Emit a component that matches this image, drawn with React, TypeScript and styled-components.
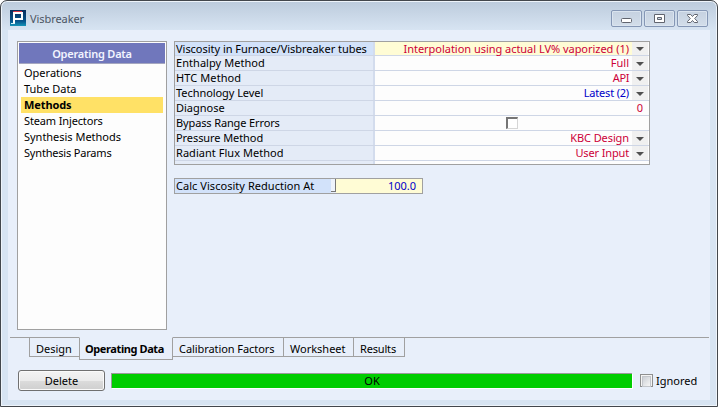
import React from 'react';
import styled, { createGlobalStyle } from 'styled-components';

const Global = createGlobalStyle`
  * { box-sizing: border-box; }
  body { margin: 0; background: #fff; overflow: hidden; }
  button { font: inherit; color: inherit; margin: 0; padding: 0; }
`;

const Window = styled.div`
  width: 718px;
  height: 407px;
  display: flex;
  flex-direction: column;
  padding: 0 7px 7px;
  border: 1px solid #43474c;
  border-radius: 7px 7px 0 0;
  background: linear-gradient(#bccbdc 0, #d7e4f2 29px, #d7e4f2 100%);
  box-shadow: inset 0 0 0 1px #eef4fa;
  font: 11px/15px 'Noto Sans', 'Open Sans', sans-serif;
  color: #000;
  white-space: nowrap;
`;

const TitleBar = styled.header`
  flex: 0 0 29px;
  display: flex;
  align-items: flex-start;
  padding: 9px 2px 0 2px;
`;

const Title = styled.h1<{ $tracking: number }>`
  flex: 1;
  margin: 1px 0 0 4px;
  font-size: 11px;
  line-height: 15px;
  font-weight: 400;
  color: #4b5563;
  letter-spacing: ${p => p.$tracking}px;
`;

const Logo = styled.svg`
  display: block;
  width: 16px;
  height: 16px;
  margin-top: 1px;
  margin-top: 0;
`;

const CaptionButtons = styled.div`
  display: flex;
  gap: 2px;
`;

const CaptionButton = styled.button`
  width: 31px;
  height: 17px;
  border: 1px solid #8597b5;
  border-radius: 2px;
  background: linear-gradient(#c5d1e0, #d3deea);
  box-shadow: inset 0 0 0 1px #dae4ef;
  svg { display: block; width: 29px; height: 15px; }
`;

const Client = styled.main`
  flex: 1;
  display: flex;
  flex-direction: column;
  background: #e8effa;
`;

const Workspace = styled.section`
  flex: 0 0 307px;
  display: flex;
  align-items: flex-start;
  padding: 11px 0 0 9px;
`;

const Sidebar = styled.nav`
  width: 150px;
  height: 289px;
  margin-right: 7px;
  border: 1px solid #a0a0a0;
  padding: 1px;
  background: #fdfdfd;
`;

const SidebarHeading = styled.h2`
  height: 21px;
  margin: 0 0 1px;
  border-bottom: 1px solid #a5a7c0;
  background: #7077bc;
  color: #f2f4ff;
  font-size: 11px;
  line-height: 22px;
  font-weight: 600;
  text-align: center;
  letter-spacing: -0.22px;
`;

const NavItem = styled.div<{ $active?: boolean; $tracking: number }>`
  height: 16px;
  margin: 0 2px;
  padding-left: 3px;
  line-height: 16px;
  background: ${p => (p.$active ? '#ffe166' : 'transparent')};
  font-weight: ${p => (p.$active ? 700 : 400)};
  letter-spacing: ${p => p.$tracking}px;
`;

const Panels = styled.div`
  display: flex;
  flex-direction: column;
  align-items: flex-start;
  gap: 13px;
`;

const Grid = styled.div`
  width: 476px;
  height: 124px;
  border: 1px solid #a0a0a0;
  background: #fdfdfd;
  overflow: hidden;
`;

const Row = styled.div`
  display: flex;
  height: 15px;
  border-bottom: 1px solid #ced6e6;
  line-height: 14px;
  &:first-child { height: 14px; line-height: 13px; }
`;

const RowLabel = styled.div<{ $active?: boolean; $tracking: number }>`
  flex: 0 0 200px;
  width: 200px;
  padding-left: 1px;
  border-right: 2px solid #d3dced;
  background: ${p => (p.$active ? '#d2e2fa' : '#e4ebf7')};
  letter-spacing: ${p => p.$tracking}px;
`;

const tones = { red: '#cc0038', blue: '#0000c8' };

const RowValue = styled.div<{ $tone: keyof typeof tones; $active?: boolean; $wide?: boolean; $tracking: number }>`
  flex: 1;
  padding-right: ${p => (p.$wide ? 6 : 3)}px;
  text-align: right;
  color: ${p => tones[p.$tone]};
  background: ${p => (p.$active ? '#fffcd5' : 'transparent')};
  letter-spacing: ${p => p.$tracking}px;
`;

const DropButton = styled.button`
  flex: 0 0 17px;
  border: 0;
  border-right: 1px solid #fdfdfd;
  background: #f0f0f0;
  svg { display: block; width: 16px; height: 13px; }
`;

const SunkenCheck = styled.span`
  width: 12px;
  height: 12px;
  margin: 1px auto 0 131px;
  border: 1px solid #d6d6d6;
  border-top: 2px solid #757575;
  border-left: 2px solid #757575;
  background: #fff;
`;

const CalcField = styled.div`
  display: flex;
  width: 249px;
  height: 16px;
  border: 1px solid #a0a0a0;
  line-height: 13px;
`;

const CalcLabel = styled.div<{ $tracking: number }>`
  width: 156px;
  padding-left: 1px;
  background: #d2e2fa;
  letter-spacing: ${p => p.$tracking}px;
`;

const CalcHandle = styled.span`
  width: 5px;
  height: 13px;
  border: solid #777;
  border-width: 0 1px 1px 0;
  background: #eef3fc;
`;

const CalcValue = styled.div`
  flex: 1;
  padding-right: 6px;
  background: #fffcd5;
  color: ${tones.blue};
  text-align: right;
`;

const TabStrip = styled.nav`
  flex: 0 0 24px;
  display: flex;
  align-items: flex-start;
  margin: 0 1px 0 2px;
  &::before, &::after {
    content: '';
    height: 1px;
    background: #a0a0a0;
  }
  &::before { width: 19px; }
  &::after { flex: 1; }
`;

const Tab = styled.div<{ $width: number; $active?: boolean; $tracking: number }>`
  width: ${p => p.$width}px;
  height: ${p => (p.$active ? 23 : 20)}px;
  border: 1px solid #a0a0a0;
  border-top-color: ${p => (p.$active ? 'transparent' : '#a0a0a0')};
  border-left-width: ${p => (p.$active ? 1 : 0)}px;
  &:first-of-type { border-left-width: 1px; border-right-width: 0; }
  padding-left: ${p => (p.$active ? 5 : 6)}px;
  line-height: 22px;
  font-weight: ${p => (p.$active ? 700 : 400)};
  letter-spacing: ${p => p.$tracking}px;
`;

const Footer = styled.footer`
  display: flex;
  align-items: center;
  height: 39px;
  padding: 0 0 0 10px;
`;

const DeleteButton = styled.button`
  width: 87px;
  height: 21px;
  border: 1px solid #707070;
  border-radius: 3px;
  background: linear-gradient(#f3f3f3 0, #ebebeb 50%, #dcdcdc 51%, #cfcfcf 100%);
  box-shadow: inset 0 0 0 1px #fafafa;
  line-height: 19px;
`;

const Status = styled.div`
  width: 521px;
  height: 15px;
  margin-left: 6px;
  border: solid #9a9a9a;
  border-width: 1px 0 0 1px;
  box-shadow: 1px 1px 0 #fff;
  background: #00cd00;
  line-height: 14px;
  text-align: center;
`;

const Ignored = styled.div`
  display: flex;
  align-items: center;
  margin-left: 8px;
  gap: 3px;
`;

const IgnoredBox = styled.span`
  width: 13px;
  height: 13px;
  border: 1px solid #8e8f8f;
  padding: 1px;
  background: #f4f4f4;
  &::before {
    content: '';
    display: block;
    height: 9px;
    border: 1px solid #c3c6cb;
    background: linear-gradient(135deg, #cbcfd5, #f6f6f6);
  }
`;

type Item = { label: string; tracking: number; active?: boolean };

const navItems: Item[] = [
  { label: 'Operations', tracking: 0 },
  { label: 'Tube Data', tracking: 0 },
  { label: 'Methods', tracking: -0.1, active: true },
  { label: 'Steam Injectors', tracking: -0.14 },
  { label: 'Synthesis Methods', tracking: -0.02 },
  { label: 'Synthesis Params', tracking: -0.19 },
];

type Method = Item & { value?: string; tone?: keyof typeof tones; drop?: boolean; valueTracking?: number };

const methods: Method[] = [
  { label: 'Viscosity in Furnace/Visbreaker tubes', tracking: -0.03, value: 'Interpolation using actual LV% vaporized (1)', drop: true, active: true, valueTracking: -0.03 },
  { label: 'Enthalpy Method', tracking: 0.05, value: 'Full', drop: true },
  { label: 'HTC Method', tracking: 0.1, value: 'API', drop: true, valueTracking: -0.4 },
  { label: 'Technology Level', tracking: -0.06, value: 'Latest (2)', tone: 'blue', drop: true, valueTracking: -0.18 },
  { label: 'Diagnose', tracking: 0, value: '0' },
  { label: 'Bypass Range Errors', tracking: -0.13 },
  { label: 'Pressure Method', tracking: -0.08, value: 'KBC Design', drop: true, valueTracking: -0.1 },
  { label: 'Radiant Flux Method', tracking: 0.04, value: 'User Input', drop: true, valueTracking: -0.14 },
];

const tabs: (Item & { width: number })[] = [
  { label: 'Design', width: 50, tracking: 0 },
  { label: 'Operating Data', width: 94, tracking: -0.4, active: true },
  { label: 'Calibration Factors', width: 111, tracking: -0.07 },
  { label: 'Worksheet', width: 70, tracking: 0 },
  { label: 'Results', width: 51, tracking: -0.17 },
];

export default function App() {
  return (
    <>
      <Global />
      <Window>
        <TitleBar>
          <Logo viewBox="0 0 16 16">
            <defs>
              <linearGradient id="logo" x1="0" y1="0" x2="0" y2="1">
                <stop offset="0" stopColor="#092d5c" />
                <stop offset=".7" stopColor="#07558c" />
                <stop offset="1" stopColor="#1695b8" />
              </linearGradient>
            </defs>
            <rect width="16" height="16" fill="url(#logo)" />
            <path d="M3.5 7V1.5H12" stroke="#d8384a" fill="none" />
            <path d="M4 13V3H12V9H5" stroke="#fff" strokeWidth="2" fill="none" />
            <path d="M1 13.5H5" stroke="#d8f4fa" />
          </Logo>
          <Title $tracking={-0.07}>Visbreaker</Title>
          <CaptionButtons>
            <CaptionButton aria-label="Minimize">
              <svg viewBox="0 0 29 15"><rect x="9.5" y="7.5" width="10" height="4" rx="1" fill="#fff" stroke="#60646e" /></svg>
            </CaptionButton>
            <CaptionButton aria-label="Maximize">
              <svg viewBox="0 0 29 15"><path d="M9.5 3.5h10v8h-10zM12.5 6.5v2h4v-2z" fill="#fff" fillRule="evenodd" stroke="#60646e" strokeLinejoin="round" /></svg>
            </CaptionButton>
            <CaptionButton aria-label="Close">
              <svg viewBox="0 0 29 15"><path d="M9.5 3.5h3.2l1.8 2 1.8-2h3.2v1L16.7 7.5l2.8 3v1h-3.2l-1.8-2-1.8 2H9.5v-1l2.8-3-2.8-3z" fill="#fff" stroke="#60646e" strokeLinejoin="round" /></svg>
            </CaptionButton>
          </CaptionButtons>
        </TitleBar>
        <Client>
          <Workspace>
            <Sidebar>
              <SidebarHeading>Operating Data</SidebarHeading>
              {navItems.map(i => (
                <NavItem key={i.label} $active={i.active} $tracking={i.tracking}>{i.label}</NavItem>
              ))}
            </Sidebar>
            <Panels>
              <Grid>
                {methods.map(m => (
                  <Row key={m.label}>
                    <RowLabel $active={m.active} $tracking={m.tracking}>{m.label}</RowLabel>
                    {m.value ? (
                      <RowValue $tone={m.tone ?? 'red'} $active={m.active} $wide={!m.drop} $tracking={m.valueTracking ?? 0}>{m.value}</RowValue>
                    ) : <SunkenCheck />}
                    {m.drop && (
                      <DropButton aria-label="Choose">
                        <svg viewBox="0 0 16 13"><path d="M4 5h8L8 9z" fill="#505050" /></svg>
                      </DropButton>
                    )}
                  </Row>
                ))}
                <Row><RowLabel $tracking={0} /></Row>
              </Grid>
              <CalcField>
                <CalcLabel $tracking={0.04}>Calc Viscosity Reduction At</CalcLabel>
                <CalcHandle />
                <CalcValue>100.0</CalcValue>
              </CalcField>
            </Panels>
          </Workspace>
          <TabStrip>
            {tabs.map(t => (
              <Tab key={t.label} $width={t.width} $active={t.active} $tracking={t.tracking}>{t.label}</Tab>
            ))}
          </TabStrip>
          <Footer>
            <DeleteButton>Delete</DeleteButton>
            <Status>OK</Status>
            <Ignored><IgnoredBox />Ignored</Ignored>
          </Footer>
        </Client>
      </Window>
    </>
  );
}
